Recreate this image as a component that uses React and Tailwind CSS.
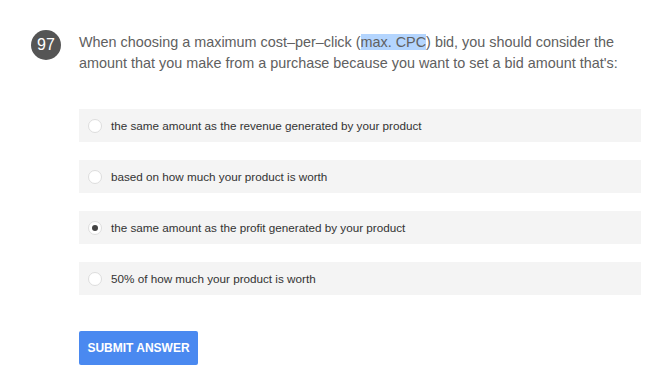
export default function App() {
  const options = [
    { text: "the same amount as the revenue generated by your product", checked: false },
    { text: "based on how much your product is worth", checked: false },
    { text: "the same amount as the profit generated by your product", checked: true },
    { text: "50% of how much your product is worth", checked: false },
  ];
  return (
    <div className="w-[650px] h-[387px] bg-white" style={{ fontFamily: '"Liberation Sans", Arial, sans-serif' }}>
      <div className="flex pt-[30px] pl-[31px]">
        <div className="w-[30px] h-[30px] rounded-full bg-[#555555] text-white text-[16px] flex items-center justify-center shrink-0">97</div>
        <div className="ml-[18px] w-[565px]">
          <p className="text-[14.4px] leading-[21px] text-[#606060] pt-[2px]">
            When choosing a maximum cost–per–click (<span className="bg-[#b4d5fe]">max. CPC</span>) bid, you should consider the amount that you make from a purchase because you want to set a bid amount that's:
          </p>
          <div className="mt-[35px] flex flex-col gap-[18px] w-[562px]">
            {options.map((o, i) => (
              <div key={i} className="h-[33px] bg-[#f4f4f4] flex items-center pl-[9px]">
                <span className="w-[14px] h-[14px] rounded-full border border-[#dddddd] bg-white flex items-center justify-center shrink-0">
                  {o.checked && <span className="w-[6px] h-[6px] rounded-full bg-[#444444]" />}
                </span>
                <span className="ml-[9px] text-[11.7px] text-[#333333]">{o.text}</span>
              </div>
            ))}
          </div>
          <button className="mt-[36px] w-[119px] h-[34px] bg-[#4a89f0] rounded-[2px] text-white text-[12px] font-bold">
            SUBMIT ANSWER
          </button>
        </div>
      </div>
    </div>
  );
}
